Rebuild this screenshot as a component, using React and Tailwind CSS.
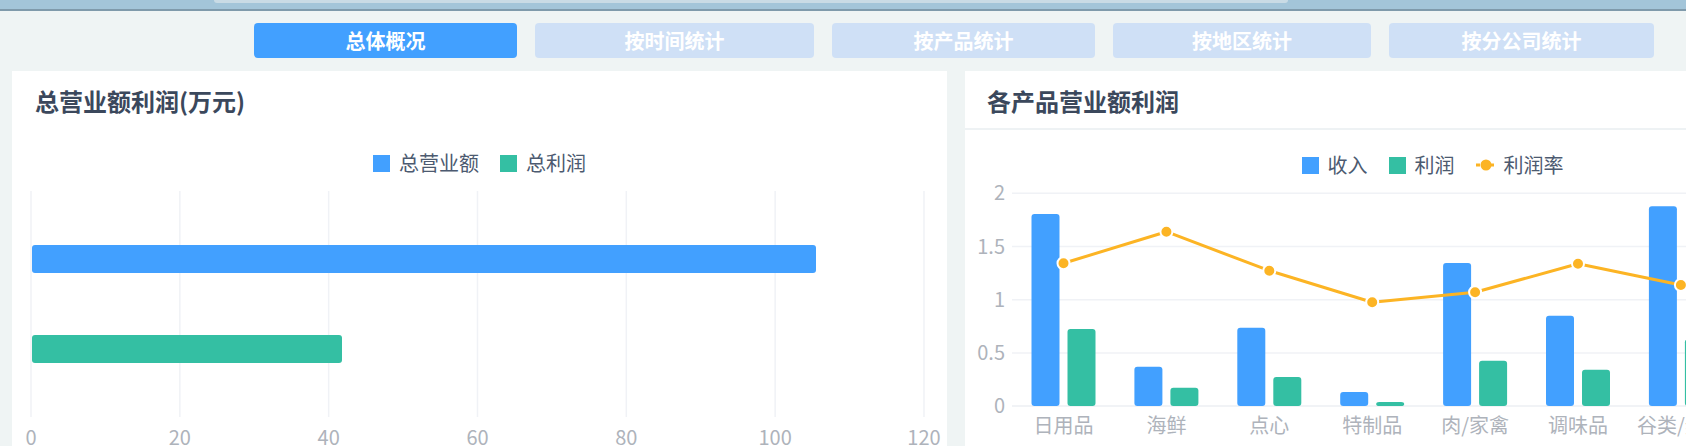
import React from "react";

const FONT = { fontFamily: '"Noto Sans CJK SC", "Noto Sans", sans-serif' };
const BLUE = "#42a0ff";
const GREEN = "#34bfa3";
const AMBER = "#fcb424";
const AXIS = "#aeb3bb";
const GRID = "#f0f2f6";

const tabs = [
  { label: "总体概况", w: "w-[263px]", active: true },
  { label: "按时间统计", w: "w-[279px]" },
  { label: "按产品统计", w: "w-[263px]" },
  { label: "按地区统计", w: "w-[258px]" },
  { label: "按分公司统计", w: "w-[265px]" },
];

function LegendSquare({ color, label }) {
  return (
    <div className="flex items-center gap-[9px]">
      <span className="w-[17px] h-[17px]" style={{ background: color }} />
      <span className="text-[20px] leading-[20px] text-[#4c5a70]">{label}</span>
    </div>
  );
}

function LeftChart() {
  const ticks = [0, 20, 40, 60, 80, 100, 120];
  const x0 = 19;
  const step = 148.83;
  return (
    <svg width="935" height="300" className="block" style={FONT}>
      {ticks.map((t, i) => (
        <line key={t} x1={x0 + i * step} x2={x0 + i * step} y1={18} y2={244} stroke={GRID} strokeWidth="1.5" />
      ))}
      <rect x={20} y={72} width={784} height={28} rx={3} fill={BLUE} />
      <rect x={20} y={162} width={310} height={28} rx={3} fill={GREEN} />
      {ticks.map((t, i) => (
        <text key={t} x={x0 + i * step} y={271.5} textAnchor="middle" fontSize="20" fill={AXIS}>
          {t}
        </text>
      ))}
    </svg>
  );
}

function RightChart() {
  const cats = ["日用品", "海鲜", "点心", "特制品", "肉/家禽", "调味品", "谷类/麦片", "饮料"];
  const blueTop = [39, 191.7, 152.7, 217, 88, 140.7, 31.3, 120];
  const greenTop = [154, 212.7, 202, 227, 185.7, 194.7, 164.3, 200];
  const rate = [88.3, 56.7, 95.7, 127.3, 117.3, 88.7, 110, 100];
  const base = 231;
  const gy = [231, 178, 124.8, 71.5, 18.3];
  const gl = ["0", "0.5", "1", "1.5", "2"];
  const cx = (i) => 98.5 + i * 102.9;
  const pts = rate.map((y, i) => `${cx(i)},${y}`).join(" ");
  return (
    <svg width="935" height="300" className="block" style={FONT}>
      {gy.map((y, i) => (
        <line key={i} x1={47} x2={935} y1={y} y2={y} stroke={i === 0 ? "#eceff3" : GRID} strokeWidth="1.5" />
      ))}
      {gy.map((y, i) => (
        <text key={i} x={40} y={y + 7} textAnchor="end" fontSize="20" fill={AXIS}>
          {gl[i]}
        </text>
      ))}
      {cats.map((c, i) => (
        <g key={c}>
          <rect x={cx(i) - 32} y={blueTop[i]} width={28} height={base - blueTop[i]} rx={3} fill={BLUE} />
          <rect x={cx(i) + 4} y={greenTop[i]} width={28} height={base - greenTop[i]} rx={3} fill={GREEN} />
          <text x={cx(i)} y={257.6} textAnchor="middle" fontSize="20" fill={AXIS}>
            {c}
          </text>
        </g>
      ))}
      <polyline points={pts} fill="none" stroke={AMBER} strokeWidth="3" strokeLinejoin="round" />
      {rate.map((y, i) => (
        <circle key={i} cx={cx(i)} cy={y} r={6} fill={AMBER} stroke="#ffffff" strokeWidth="2" />
      ))}
    </svg>
  );
}

export default function App() {
  return (
    <div className="w-[1686px] h-[446px] overflow-hidden bg-[#eff4f4]" style={FONT}>
      <div className="h-[11px] bg-[#a3c5d9] border-b-2 border-[#7f9aab]">
        <div className="ml-[214px] w-[1074px] h-[3px] rounded-b-[6px] bg-[#c9dbe5]" />
      </div>
      <div className="mt-[12px] ml-[254px] flex gap-[18px]">
        {tabs.map((t) => (
          <div
            key={t.label}
            className={`${t.w} h-[35px] rounded-[4px] flex items-center justify-center text-white font-bold text-[20px] ${
              t.active ? "bg-[#42a0ff]" : "bg-[#cfe0f6]"
            }`}
          >
            {t.label}
          </div>
        ))}
      </div>
      <div className="mt-[13px] ml-[12px] flex gap-[18px] w-[1900px]">
        <div className="w-[935px] h-[400px] shrink-0 bg-white">
          <div className="h-[57px] pt-[3px] px-[23px] flex items-center text-[24px] font-bold text-[#3b485c]">
            总营业额利润(万元)
          </div>
          <div className="mt-[25px] h-[20px] flex items-center justify-center gap-[21px]">
            <LegendSquare color={BLUE} label="总营业额" />
            <LegendSquare color={GREEN} label="总利润" />
          </div>
          <LeftChart />
        </div>
        <div className="w-[935px] h-[400px] shrink-0 bg-white">
          <div className="h-[59px] pt-[3px] px-[22px] flex items-center text-[24px] font-bold text-[#3b485c] border-b-2 border-[#eef2f4]">
            各产品营业额利润
          </div>
          <div className="mt-[25px] h-[20px] flex items-center justify-center gap-[21px]">
            <LegendSquare color={BLUE} label="收入" />
            <LegendSquare color={GREEN} label="利润" />
            <div className="flex items-center gap-[8px]">
              <svg width="20" height="14">
                <line x1="0" y1="7" x2="20" y2="7" stroke={AMBER} strokeWidth="3" strokeDasharray="4 3" />
                <circle cx="10" cy="7" r="5.5" fill={AMBER} />
              </svg>
              <span className="text-[20px] leading-[20px] text-[#4c5a70]">利润率</span>
            </div>
          </div>
          <RightChart />
        </div>
      </div>
    </div>
  );
}
